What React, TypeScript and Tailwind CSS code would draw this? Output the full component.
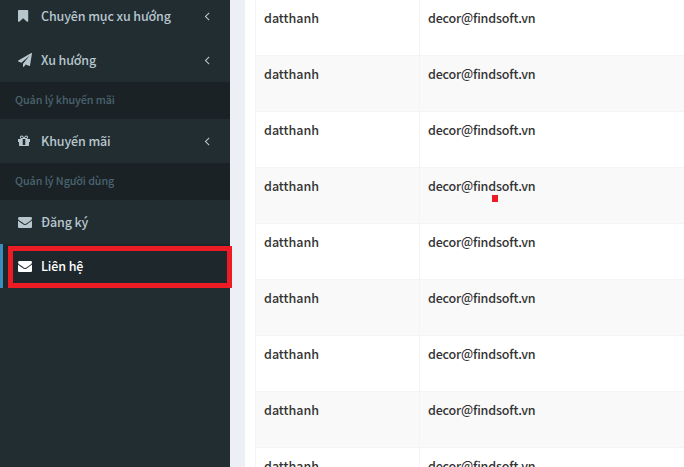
type IconProps = { d: string; className: string };

function Icon({ d, className }: IconProps) {
  return (
    <svg viewBox="0 0 1792 1792" className={className} fill="currentColor" aria-hidden="true">
      <path d={d} />
    </svg>
  );
}

const BOOKMARK =
  "M1192 128q23 0 44 9 33 13 52.5 41t19.5 62v1289q0 34-19.5 62t-52.5 41q-19 8-44 8-48 0-83-32l-455-424-455 424q-36 33-83 33-23 0-44-9-33-13-52.5-41t-19.5-62v-1289q0-34 19.5-62t52.5-41q21-9 44-9h1076z";
const PLANE =
  "M1764 11q33 24 27 64l-256 1536q-5 29-32 45-14 8-31 8-11 0-24-5l-453-185-242 295q-18 23-49 23-13 0-22-4-19-7-30.5-23.5t-11.5-36.5v-349l864-1059-1069 925-395-162q-37-14-40-55-2-40 32-59l1664-960q15-9 32-9 20 0 36 11z";
const GIFT =
  "M928 1356v-716h-320v716q0 25 18 38.5t46 13.5h192q28 0 46-13.5t18-38.5zm-456-844h195l-126-161q-26-31-69-31-40 0-68 28t-28 68 28 68 68 28zm688-96q0-40-28-68t-68-28q-43 0-69 31l-125 161h194q40 0 68-28t28-68zm376 256v320q0 14-9 23t-23 9h-96v416q0 40-28 68t-68 28h-1088q-40 0-68-28t-28-68v-416h-96q-14 0-23-9t-9-23v-320q0-14 9-23t23-9h440q-93 0-158.5-65.5t-65.5-158.5 65.5-158.5 158.5-65.5q107 0 168 77l128 165 128-165q61-77 168-77 93 0 158.5 65.5t65.5 158.5-65.5 158.5-158.5 65.5h440q14 0 23 9t9 23z";
const ENVELOPE =
  "M1792 710v794q0 66-47 113t-113 47h-1472q-66 0-113-47t-47-113v-794q44 49 101 87 362 246 497 345 57 42 92.5 65.5t94.5 48 110 24.5h2q51 0 110-24.5t94.5-48 92.5-65.5q170-123 498-345 57-39 100-87zm0-294q0 79-49 151t-122 123q-376 261-468 325-10 7-42.5 31t-54 38.5-52 32.5-57.5 27-50 9h-2q-23 0-50-9t-57.5-27-52-32.5-54-38.5-42.5-31q-91-64-262-182.5t-205-142.5q-62-42-117-115.5t-55-136.5q0-78 41.5-130t118.5-52h1472q65 0 112.5 47t47.5 113z";
const ANGLE_LEFT =
  "M1203 544q0 13-10 23l-393 393 393 393q10 10 10 23t-10 23l-50 50q-10 10-23 10t-23-10l-466-466q-10-10-10-23t10-23l466-466q10-10 23-10t23 10l50 50q10 10 10 23z";

type ItemProps = { label: string; icon: string; tree?: boolean; active?: boolean };

function Item({ label, icon, tree, active }: ItemProps) {
  return (
    <li
      className={
        active
          ? "flex h-11 items-center border-l-3 border-[#3c8dbc] bg-[#1e282c] px-[15px] text-white"
          : "flex h-11 items-center border-l-3 border-transparent px-[15px] text-[#b8c7ce]"
      }
    >
      <Icon d={icon} className="mr-[9px] size-3.5 shrink-0" />
      <span className="grow text-[12.5px] leading-5 font-medium tracking-[-0.12px] whitespace-nowrap">
        {label}
      </span>
      {tree && <Icon d={ANGLE_LEFT} className="mr-px size-3.5 shrink-0" />}
    </li>
  );
}

function Header({ label }: { label: string }) {
  return (
    <li className="h-[37px] bg-[#1a2226] pt-2.5 pl-[15px] text-[10.75px] leading-4 font-medium tracking-[-0.09px] whitespace-nowrap text-[#4b646f]">
      {label}
    </li>
  );
}

const rows = Array.from({ length: 9 }, () => ({ name: "datthanh", email: "decor@findsoft.vn" }));

export default function App() {
  return (
    <div className="relative flex h-[467px] w-[684px] overflow-hidden bg-[#ecf0f5] font-['Noto_Sans_CJK_SC','Noto_Sans',sans-serif]">
      <aside className="w-[230px] shrink-0 bg-[#222d32]">
        <ul className="-mt-1.5">
          <Item label="Chuyên mục xu hướng" icon={BOOKMARK} tree />
          <Item label="Xu hướng" icon={PLANE} tree />
          <Header label="Quản lý khuyến mãi" />
          <Item label="Khuyến mãi" icon={GIFT} tree />
          <Header label="Quản lý Người dùng" />
          <Item label="Đăng ký" icon={ENVELOPE} />
          <Item label="Liên hệ" icon={ENVELOPE} active />
        </ul>
      </aside>
      <main className="ml-[15px] grow bg-white pl-2.5">
        <div className="-mt-px border-l border-[#f4f4f4]">
          {rows.map((row, i) => (
            <div
              key={i}
              className="flex h-14 border-t border-[#f4f4f4] text-[12.5px] leading-5 font-medium text-[#333] odd:bg-white even:bg-[#f9f9f9]"
            >
              <div className="w-[164px] border-r border-[#f4f4f4] pt-2 pl-2">{row.name}</div>
              <div className="pt-2 pl-2 tracking-[-0.17px]">{row.email}</div>
            </div>
          ))}
        </div>
      </main>
      <div className="absolute top-[246px] left-2 h-[42px] w-56 border-5 border-[#ed1c24]" />
      <div className="absolute top-[195px] left-[492px] h-[7px] w-1.5 bg-[#ed1c24]" />
    </div>
  );
}
